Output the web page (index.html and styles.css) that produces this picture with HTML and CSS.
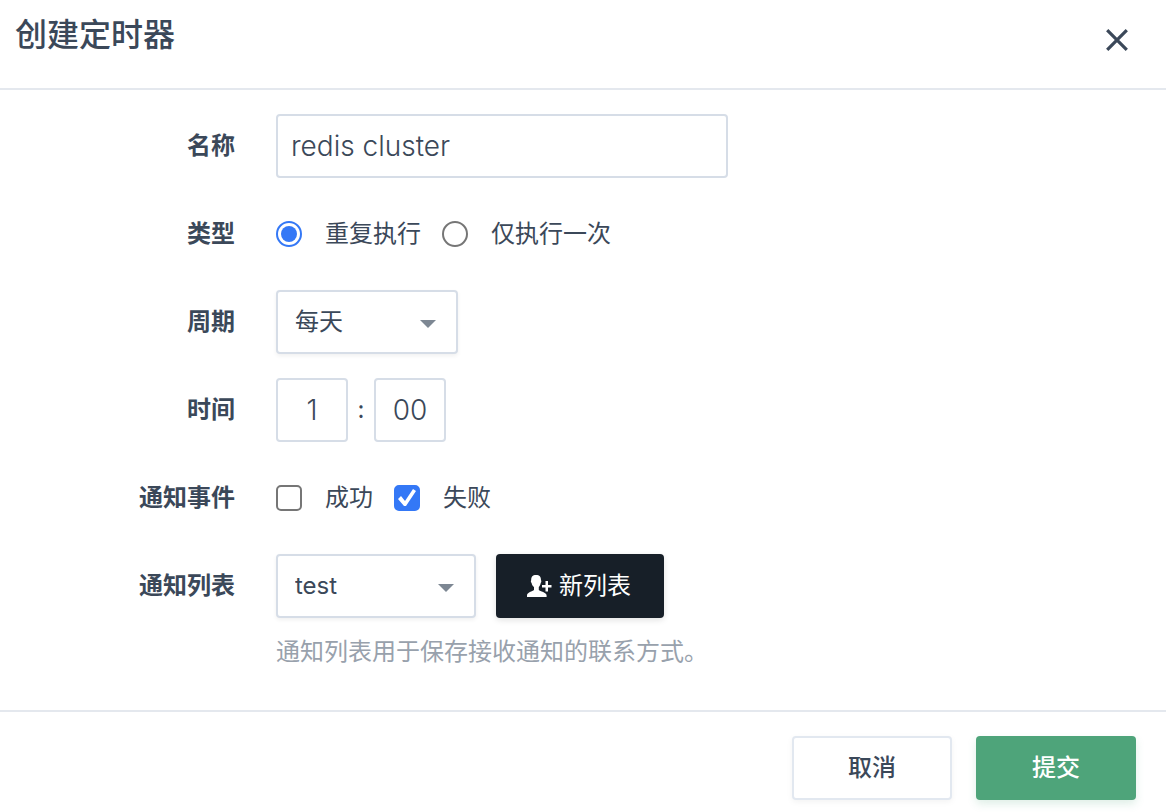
FILE: index.html
```html
<!DOCTYPE html>
<html lang="zh-CN">
<head>
<meta charset="utf-8">
<meta name="viewport" content="width=device-width, initial-scale=1">
<title>创建定时器</title>
<link rel="stylesheet" href="styles.css">
</head>
<body>
<form class="dialog">
  <header class="dialog-header">
    <h1 class="dialog-title">创建定时器</h1>
    <button class="close" type="button" aria-label="关闭">
      <svg width="22" height="22" viewBox="0 0 22 22" aria-hidden="true"><path d="M1.2 1.2 20.8 20.8M20.8 1.2 1.2 20.8" fill="none" stroke="currentColor" stroke-width="3.2"/></svg>
    </button>
  </header>

  <main class="dialog-body">
    <div class="row">
      <label class="label" for="name">名称</label>
      <div class="field"><input class="box name" id="name" type="text" value="redis cluster"></div>
    </div>
    <div class="row" role="radiogroup" aria-labelledby="type-label">
      <span class="label" id="type-label">类型</span>
      <div class="field options">
        <label class="option"><input class="radio" type="radio" name="type" checked>重复执行</label>
        <label class="option"><input class="radio" type="radio" name="type">仅执行一次</label>
      </div>
    </div>
    <div class="row">
      <label class="label" for="cycle">周期</label>
      <div class="field">
        <div class="picker picker-small">
          <select class="box select" id="cycle"><option>每天</option></select>
        </div>
      </div>
    </div>
    <div class="row">
      <label class="label" for="hour">时间</label>
      <div class="field time">
        <input class="box digits" id="hour" type="text" value="1">
        <span class="colon">:</span>
        <input class="box digits" type="text" value="00" aria-label="分钟">
      </div>
    </div>
    <div class="row" role="group" aria-labelledby="event-label">
      <span class="label" id="event-label">通知事件</span>
      <div class="field options">
        <label class="option"><input class="check" type="checkbox">成功</label>
        <label class="option"><input class="check" type="checkbox" checked>失败</label>
      </div>
    </div>
    <div class="row">
      <label class="label" for="list">通知列表</label>
      <div class="field list">
        <div class="picker">
          <select class="box select" id="list"><option>test</option></select>
        </div>
        <button class="button dark" type="button">
          <svg width="26" height="24" viewBox="0 0 26 24" aria-hidden="true"><path fill="currentColor" d="M9 1C12.600 1 14 2.800 14 6.200C14.500 6.500 14.500 8 13.700 9C13.400 10.700 12.800 12 11.800 13V16C13 17.600 19.600 18 19.600 21.500V23H0V21.500C0 18 5.500 17.600 7 16V13C5.600 12 4.900 10.700 4.600 9C3.700 8 3.700 6.500 4.200 6.200C4.200 2.800 5.600 1 9 1ZM18.500 7H21V11H24.500V13.500H21V17.500H18.500V13.500H15V11H18.500Z"/></svg>
          新列表
        </button>
      </div>
    </div>
    <p class="help">通知列表用于保存接收通知的联系方式。</p>
  </main>

  <footer class="dialog-footer">
    <button class="button cancel" type="button">取消</button>
    <button class="button submit" type="submit">提交</button>
  </footer>
</form>
</body>
</html>
```
FILE: styles.css
```css
* {
  box-sizing: border-box;
}

body {
  margin: 0;
  background: #fff;
  color: #3b4859;
  font: 24px/36px Inter, "Noto Sans CJK SC", sans-serif;
}

input,
select,
button {
  margin: 0;
  color: inherit;
  font: inherit;
}

.dialog-header {
  display: flex;
  justify-content: space-between;
  align-items: flex-start;
  padding: 11px 32px 29px 15px;
  border-bottom: 2px solid #e4e8ee;
}

.dialog-title {
  margin: 0;
  font-size: 32px;
  font-weight: 500;
  line-height: 48px;
}

.close {
  display: flex;
  margin-top: 12px;
  padding: 6px;
  border: 0;
  background: none;
}

.dialog-body {
  display: grid;
  gap: 24px;
  padding: 24px 24px 40px 0;
}

.row {
  display: grid;
  grid-template-columns: 235px 1fr;
  column-gap: 41px;
  align-items: center;
  min-height: 64px;
}

.label {
  font-weight: 600;
  text-align: right;
}

.field {
  display: flex;
  align-items: center;
}

.box {
  height: 64px;
  border: 2px solid #d6dde7;
  border-radius: 4px;
  background: #fff;
}

.name {
  width: 452px;
  padding: 0 13px;
  font-size: 28px;
  font-weight: 300;
}

.options {
  gap: 21px;
}

.option {
  display: flex;
  align-items: center;
  gap: 23px;
}

.radio,
.check {
  display: grid;
  place-content: center;
  width: 26px;
  height: 26px;
  border: 2px solid #767676;
  appearance: none;
}

.radio {
  border-radius: 50%;
}

.radio:checked {
  border-color: #3478f6;
}

.radio:checked::before {
  width: 16px;
  height: 16px;
  border-radius: 50%;
  background: #3478f6;
  content: "";
}

.check {
  border-radius: 5px;
}

.check:checked {
  border-color: #3478f6;
  background: #3478f6;
}

.check:checked::before {
  width: 20px;
  height: 18px;
  background: #fff;
  clip-path: polygon(1px 10px, 4px 7px, 8px 12px, 16px 0, 19px 2px, 9px 17px, 7px 17px);
  content: "";
}

.picker {
  position: relative;
  width: 200px;
}

.picker-small {
  width: 182px;
}

.picker::after {
  position: absolute;
  top: 30px;
  right: 22px;
  border: 8px solid transparent;
  border-top-color: #7d8793;
  border-bottom: 0;
  content: "";
  pointer-events: none;
}

.select {
  width: 100%;
  padding: 0 40px 0 17px;
  box-shadow: 0 2px 4px rgb(0 0 0 / 6%);
  appearance: none;
}

.digits {
  width: 72px;
  padding: 0;
  font-size: 28px;
  font-weight: 300;
  text-align: center;
}

.colon {
  width: 26px;
  text-align: center;
}

.list {
  gap: 20px;
}

.button {
  display: flex;
  justify-content: center;
  align-items: center;
  width: 160px;
  height: 64px;
  padding: 0;
  border: 0;
  border-radius: 4px;
  font-weight: 500;
}

.dark {
  gap: 6px;
  width: 168px;
  padding-right: 2px;
  background: #171f28;
  color: #fff;
  font-weight: 400;
  box-shadow: 0 2px 6px rgb(0 0 0 / 12%);
}

.help {
  margin: -8px 0 0 276px;
  color: #98a1ac;
}

.dialog-footer {
  display: flex;
  justify-content: flex-end;
  gap: 24px;
  padding: 24px 30px 12px;
  border-top: 2px solid #e4e8ee;
}

.cancel {
  border: 2px solid #e2e8f0;
  background: #fff;
  box-shadow: 0 2px 6px rgb(0 0 0 / 5%);
}

.submit {
  background: #4ea47a;
  color: #fff;
  box-shadow: 0 4px 8px rgb(78 164 122 / 18%);
}
```
